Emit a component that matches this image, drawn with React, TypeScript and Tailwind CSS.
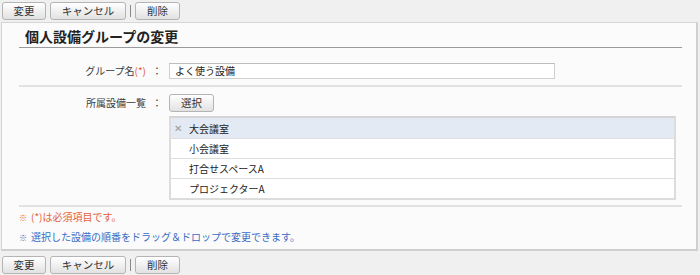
import React from "react";

const font = { fontFamily: '"Noto Sans CJK JP", "Noto Sans", sans-serif' };

function Btn({ children, w }: { children: React.ReactNode; w: string }) {
  return (
    <button
      className={`${w} h-[18px] flex items-center justify-center rounded-[3px] border border-[#b4b4b4] bg-gradient-to-b from-[#ffffff] to-[#e2e2e2] text-[10.5px] leading-none text-[#333] shadow-[inset_0_1px_0_#fff]`}
    >
      {children}
    </button>
  );
}

function ButtonRow() {
  return (
    <div className="flex items-center h-[18px] pl-[2px]">
      <Btn w="w-[44px]">変更</Btn>
      <div className="w-[4px]" />
      <Btn w="w-[76px]">キャンセル</Btn>
      <div className="w-[4px]" />
      <div className="w-[1px] h-[12px] bg-[#888]" />
      <div className="w-[4px]" />
      <Btn w="w-[45px]">削除</Btn>
    </div>
  );
}

const items = ["大会議室", "小会議室", "打合せスペースA", "プロジェクターA"];

export default function App() {
  return (
    <div className="w-[700px] h-[275px] bg-[#f0f0f0] pt-[2px] overflow-hidden" style={font}>
      <ButtonRow />
      <div className="mt-[2px] ml-[1px] w-[697px] h-[229px] bg-[#fbfbfb] border border-[#d6d6d6] border-r-[2px] border-b-[2px] border-r-[#cfcfcf] border-b-[#cfcfcf] pl-[17px] pr-[14px]">
        <div className="h-[25px] border-b border-[#9a9a9a] pl-[6px] pt-[4px] text-[14px] leading-[18px] font-bold text-[#222]">
          個人設備グループの変更
        </div>
        <div className="flex items-center h-[39px] pt-[8px] border-b-[2px] border-[#e2e2e2]">
          <div className="w-[145px] text-right text-[10px] text-[#3a3a3a] pr-[2px]">
            グループ名<span className="text-[#e4572e]">(*)</span>
            <span className="ml-[6px]">：</span>
          </div>
          <div className="ml-[5px] w-[386px] h-[16px] border border-[#cfcfcf] border-t-[#bdbdbd] bg-white flex items-center pl-[5px] text-[10px] text-[#222]">
            よく使う設備
          </div>
        </div>
        <div className="flex pt-[7px] pb-[5px] border-b-[2px] border-[#e2e2e2]">
          <div className="w-[145px] text-right text-[10px] text-[#3a3a3a] pr-[2px] leading-[18px]">
            所属設備一覧<span className="ml-[6px]">：</span>
          </div>
          <div className="ml-[5px] flex flex-col">
            <Btn w="w-[45px]">選択</Btn>
            <div className="mt-[4px] w-[507px] border-2 border-[#dcdcdc] border-t-[#d4d4d4] bg-white">
              {items.map((it, i) => (
                <div
                  key={it}
                  className={`h-[20px] flex items-center text-[10px] text-[#222] ${
                    i > 0 ? "border-t-[1.5px] border-[#dedede]" : ""
                  } ${i === 0 ? "bg-[#e3eaf3]" : "bg-white"}`}
                >
                  <span className="w-[18px] pl-[3px] text-[10px] leading-none text-[#9a9a9a]">{i === 0 ? "✕" : ""}</span>
                  <span>{it}</span>
                </div>
              ))}
            </div>
          </div>
        </div>
        <div className="pt-[0px] text-[10px] leading-[19px]">
          <div className="text-[#e5603a]">
            <span className="text-[8px] mr-[4px]">※</span>(*)は必須項目です。
          </div>
          <div className="text-[#3a6cc4]">
            <span className="text-[8px] mr-[4px]">※</span>選択した設備の順番をドラッグ＆ドロップで変更できます。
          </div>
        </div>
      </div>
      <div className="mt-[5px]">
        <ButtonRow />
      </div>
    </div>
  );
}
